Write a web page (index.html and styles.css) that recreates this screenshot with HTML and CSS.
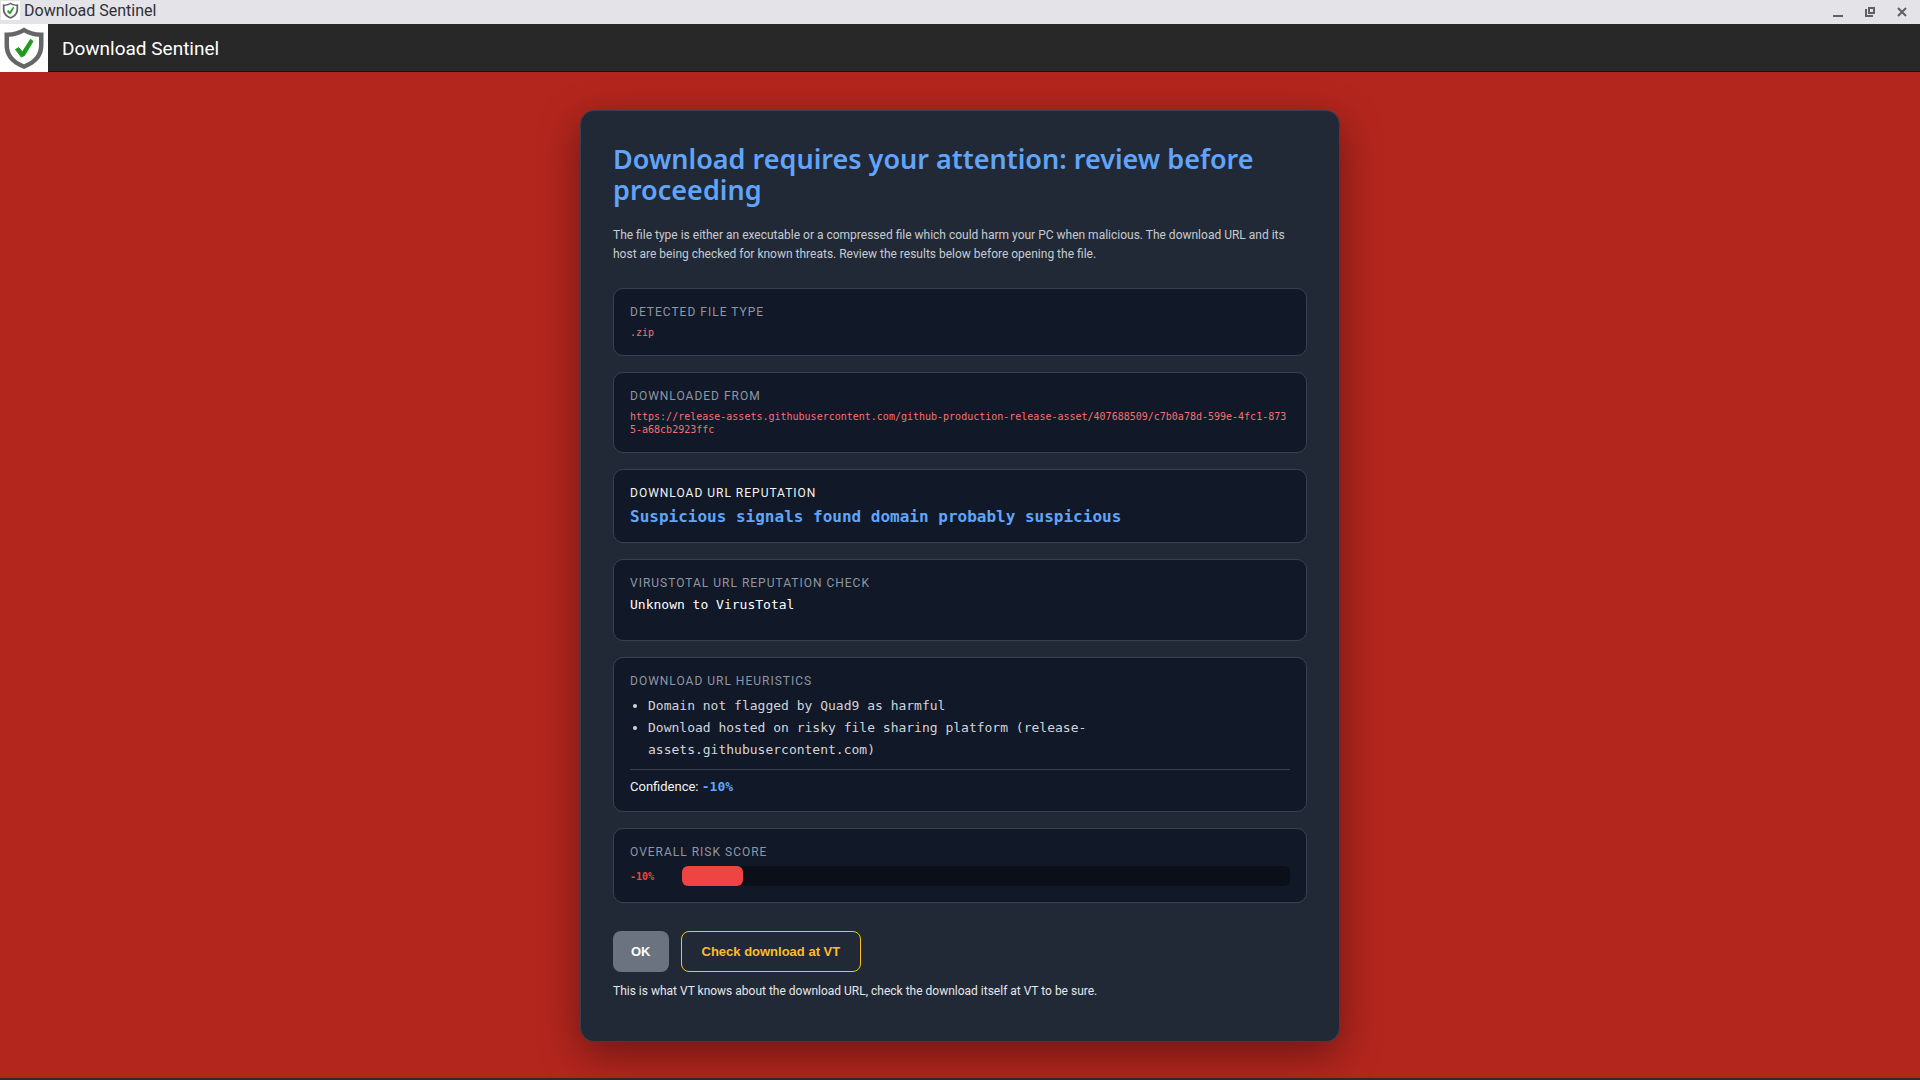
FILE: index.html
```html
<!DOCTYPE html>
<html lang="en">
<head>
<meta charset="utf-8">
<title>Download Sentinel</title>
<link rel="stylesheet" href="styles.css">
</head>
<body>
<svg width="0" height="0" class="defs" aria-hidden="true">
  <symbol id="shield" viewBox="0 0 48 48">
    <path d="M24 3.5 C18 7.5 12 9 4.5 8.5 V21 C4.5 31.500 10 39.500 24 45 C38 39.500 43.500 31.500 43.500 21 V8.500 C36 9 30 7.500 24 3.500 Z" fill="#666"/>
    <path d="M24 8.500 C19 11.300 14.500 12.600 9 12.700 V21 C9 29.500 13.500 36 24 40.300 C34.500 36 39 29.500 39 21 V12.700 C33.500 12.600 29 11.300 24 8.500 Z" fill="#fff"/>
    <path d="M15.500 25.500 L18.800 23.600 L22.300 28 L30.500 15.300 L33 17.300 L24.500 31.500 L21.300 33 Z" fill="#219a1d" stroke="#219a1d" stroke-width="1"/>
  </symbol>
</svg>

<div class="titlebar">
  <svg class="titlebar-icon" aria-hidden="true"><use href="#shield"/></svg>
  <span class="titlebar-name">Download Sentinel</span>
  <div class="window-controls">
    <button type="button" aria-label="Minimize"><svg viewBox="0 0 10 10"><path d="M0 8h10v2H0z"/></svg></button>
    <button type="button" aria-label="Restore"><svg viewBox="0 0 10 10"><path fill-rule="evenodd" d="M3 0h7v7H3zM5 2v3h3V2z"/><path d="M0 2h2v6h6v2H0z"/></svg></button>
    <button type="button" aria-label="Close"><svg viewBox="0 0 10 10"><path d="M1 1l8 8M9 1l-8 8" stroke="#5d6065" stroke-width="2"/></svg></button>
  </div>
</div>

<header class="app-header">
  <svg class="app-logo" aria-hidden="true"><use href="#shield"/></svg>
  <span class="app-name">Download Sentinel</span>
</header>

<main class="page">
  <article class="card">
    <h1 class="title">Download requires your attention: review before proceeding</h1>
    <p class="intro">The file type is either an executable or a compressed file which could harm your PC when malicious. The download URL and its host are being checked for known threats. Review the results below before opening the file.</p>

    <div class="panels">
      <section class="panel">
        <h2 class="label">Detected file type</h2>
        <div class="value-small">.zip</div>
      </section>

      <section class="panel">
        <h2 class="label">Downloaded from</h2>
        <div class="value-small">https://release-assets.githubusercontent.com/github-production-release-asset/407688509/c7b0a78d-599e-4fc1-8735-a68cb2923ffc</div>
      </section>

      <section class="panel">
        <h2 class="label label-strong">Download URL reputation</h2>
        <div class="verdict">Suspicious signals found domain probably suspicious</div>
      </section>

      <section class="panel">
        <h2 class="label">VirusTotal URL reputation check</h2>
        <div class="vt-status">Unknown to VirusTotal</div>
      </section>

      <section class="panel">
        <h2 class="label">Download URL heuristics</h2>
        <ul class="findings">
          <li>Domain not flagged by Quad9 as harmful</li>
          <li>Download hosted on risky file sharing platform (release-assets.githubusercontent.com)</li>
        </ul>
        <div class="confidence">Confidence: <strong>-10%</strong></div>
      </section>

      <section class="panel">
        <h2 class="label">Overall risk score</h2>
        <div class="score">
          <span class="score-value">-10%</span>
          <div class="track"><div class="fill" style="width: 10%"></div></div>
        </div>
      </section>
    </div>

    <div class="actions">
      <button type="button" class="btn btn-ok">OK</button>
      <button type="button" class="btn btn-check">Check download at VT</button>
    </div>
    <p class="note">This is what VT knows about the download URL, check the download itself at VT to be sure.</p>
  </article>
</main>
<div class="bottom-edge"></div>
</body>
</html>
```
FILE: styles.css
```css
* { box-sizing: border-box; }

body {
  margin: 0;
  min-height: 100vh;
  display: flex;
  flex-direction: column;
  background: #b3261e;
  color: #e5e7eb;
  font-family: Roboto, "Noto Sans", sans-serif;
  font-size: 12px;
}

h1, h2, p, ul { margin: 0; }

.defs { position: absolute; }

/* Window frame */
.titlebar {
  display: flex;
  align-items: center;
  height: 24px;
  padding: 0 13px 0 1px;
  background: #e4e3e8;
  color: #2e3035;
}

.titlebar-icon {
  width: 19px;
  height: 19px;
  margin-bottom: 3px;
  background: #fff;
}

.titlebar-name {
  margin-left: 4px;
  padding-bottom: 2px;
  font-size: 16px;
  line-height: 20px;
}

.window-controls {
  display: flex;
  gap: 22px;
  margin-left: auto;
}

.window-controls button {
  display: flex;
  padding: 0;
  border: 0;
  background: none;
}

.window-controls svg {
  width: 10px;
  height: 10px;
  fill: #5d6065;
}

.app-header {
  display: flex;
  align-items: center;
  height: 48px;
  background: #282828;
  border-bottom: 1px solid #151515;
  color: #fff;
}

.app-logo {
  width: 48px;
  height: 48px;
  background: #fff;
}

.app-name {
  margin-left: 14px;
  padding-top: 2px;
  font-size: 19px;
  line-height: 24px;
}

/* Warning card */
.page {
  flex: 1;
  padding: 38px 24px 32px;
}

.card {
  max-width: 760px;
  margin: 0 auto;
  padding: 32px 32px 40px;
  background: #212936;
  border: 1px solid #374151;
  border-radius: 14px;
  box-shadow: 0 12px 40px rgba(0, 0, 0, 0.4);
}

.title {
  color: #60a5fa;
  font-family: "Noto Sans", sans-serif;
  font-size: 27px;
  font-weight: 600;
  line-height: 31px;
}

.intro {
  margin: 21px 0 24px;
  color: #c8ccd2;
  line-height: 19px;
}

.panels {
  display: flex;
  flex-direction: column;
  gap: 16px;
}

.panel {
  padding: 16px;
  background: #111827;
  border: 1px solid #374151;
  border-radius: 10px;
}

.label {
  margin-bottom: 6px;
  color: #8f97a5;
  font-size: 12px;
  font-weight: 400;
  line-height: 15px;
  letter-spacing: 1px;
  text-transform: uppercase;
}

.label-strong { color: #f3f4f6; }

.value-small,
.verdict,
.vt-status,
.findings,
.confidence strong,
.score-value {
  font-family: "DejaVu Sans Mono", monospace;
}

.value-small {
  color: #f87171;
  font-size: 10px;
  line-height: 13px;
  word-break: break-all;
}

.verdict {
  color: #60a5fa;
  font-size: 16px;
  font-weight: 700;
  line-height: 19px;
}

.vt-status {
  margin-bottom: 12px;
  color: #fff;
  font-size: 13px;
  line-height: 15px;
}

.findings {
  padding-left: 18px;
  color: #d1d5db;
  font-size: 13px;
  line-height: 22px;
}

.confidence {
  margin-top: 8px;
  padding-top: 9px;
  border-top: 1px solid #374151;
  color: #f3f4f6;
  font-size: 13px;
  line-height: 16px;
}

.confidence strong { color: #60a5fa; }

.score {
  display: flex;
  align-items: center;
  gap: 12px;
}

.score-value {
  min-width: 40px;
  color: #ef4444;
  font-size: 10px;
  font-weight: 700;
}

.track {
  flex: 1;
  height: 20px;
  background: #0b0f17;
  border-radius: 6px;
}

.fill {
  height: 100%;
  background: #ef4444;
  border-radius: 6px;
}

.actions {
  display: flex;
  gap: 12px;
  margin-top: 28px;
}

.btn {
  padding: 12px 18px;
  border: 0;
  border-radius: 8px;
  font-family: "Liberation Sans", Arial, sans-serif;
  font-size: 13px;
  font-weight: 700;
  line-height: 15px;
}

.btn-ok {
  background: #6b7280;
  color: #fff;
}

.btn-check {
  padding: 12px 20px;
  background: transparent;
  border: 1px solid #fbbf24;
  color: #fbbf24;
}

.note {
  margin-top: 10px;
  color: #e5e7eb;
  line-height: 19px;
}

.bottom-edge {
  height: 2px;
  background: #2b2b2b;
}
```
